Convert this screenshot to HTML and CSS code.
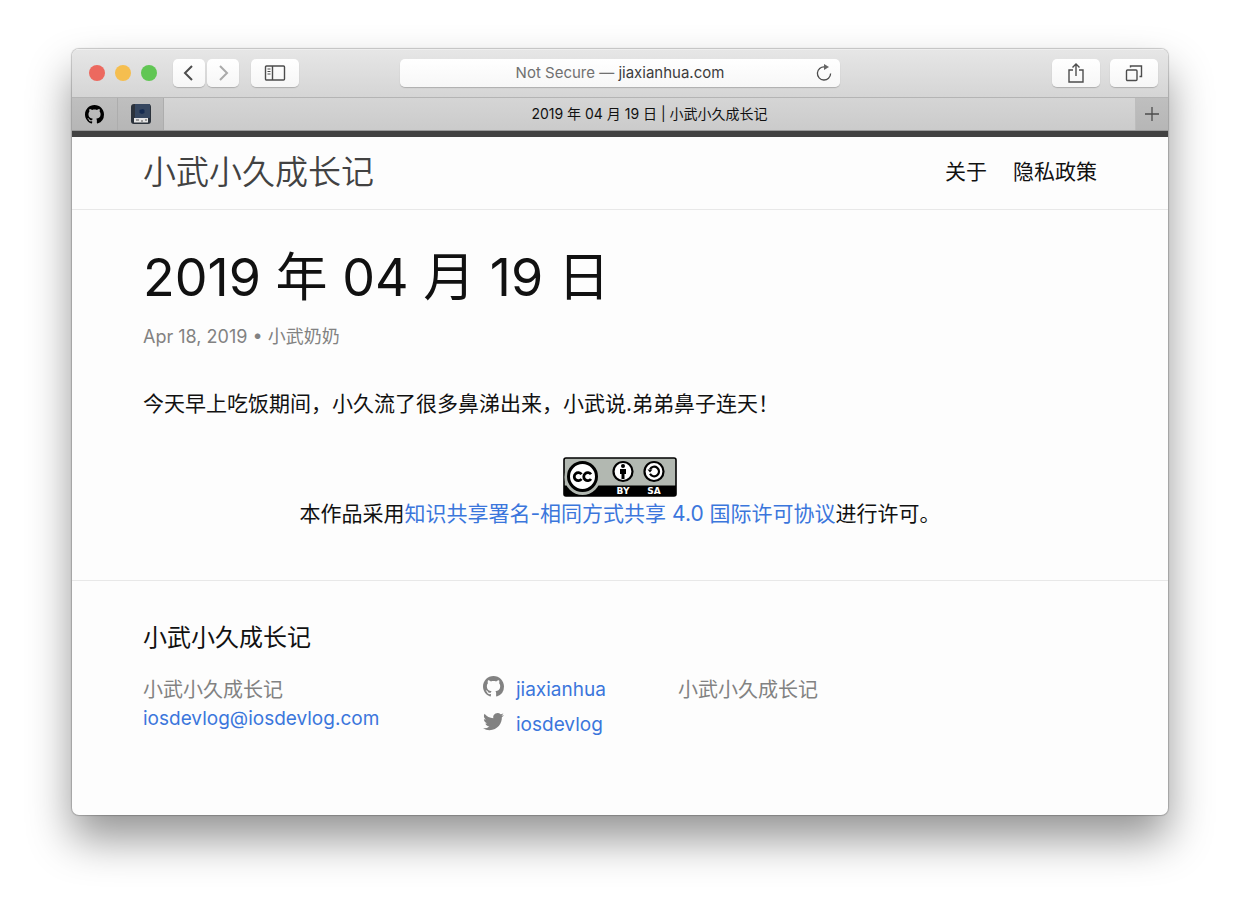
FILE: index.html
```html
<!DOCTYPE html>
<html lang="zh-CN">
<head>
<meta charset="utf-8">
<meta name="viewport" content="width=device-width, initial-scale=1">
<title>2019 年 04 月 19 日 | 小武小久成长记</title>
<link rel="stylesheet" href="styles.css">
</head>
<body>
<svg class="sprite" aria-hidden="true">
  <symbol id="github" viewBox="0 0 16 16"><path d="M8 0C3.58 0 0 3.58 0 8c0 3.54 2.29 6.53 5.47 7.59.4.07.55-.17.55-.38 0-.19-.01-.82-.01-1.49-2.01.37-2.53-.49-2.69-.94-.09-.23-.48-.94-.82-1.13-.28-.15-.68-.52-.01-.53.63-.01 1.08.58 1.23.82.72 1.21 1.87.87 2.33.66.07-.52.28-.87.51-1.07-1.78-.2-3.64-.89-3.64-3.95 0-.87.31-1.59.82-2.15-.08-.2-.36-1.02.08-2.12 0 0 .67-.21 2.2.82.64-.18 1.32-.27 2-.27s1.36.09 2 .27c1.53-1.04 2.2-.82 2.2-.82.44 1.1.16 1.92.08 2.12.51.56.82 1.27.82 2.15 0 3.07-1.87 3.75-3.65 3.95.29.25.54.73.54 1.48 0 1.07-.01 1.93-.01 2.2 0 .21.15.46.55.38A8.01 8.01 0 0 0 16 8c0-4.42-3.58-8-8-8z"/></symbol>
</svg>
<div class="window">
  <div class="toolbar">
    <div class="tools tools-left">
      <div class="lights">
        <button class="light light-close" aria-label="Close"></button>
        <button class="light light-min" aria-label="Minimize"></button>
        <button class="light light-zoom" aria-label="Zoom"></button>
      </div>
      <div class="history">
        <button class="tool tool-narrow" aria-label="Back"><svg width="20" height="20" viewBox="0 0 20 20"><path d="M13 3 6 10l7 7" stroke-width="2"/></svg></button>
        <button class="tool tool-narrow tool-off" aria-label="Forward"><svg width="20" height="20" viewBox="0 0 20 20"><path d="m7 3 7 7-7 7" stroke-width="2"/></svg></button>
      </div>
      <button class="tool" aria-label="Sidebar"><svg width="22" height="18" viewBox="0 0 22 18"><rect x="1.5" y="2" width="19" height="14" rx="1" stroke-width="1.4"/><path d="M8.5 2v14" stroke-width="1.4"/><path d="M3.5 5h3M3.5 7.5h3M3.5 10h3" stroke-width="1"/></svg></button>
    </div>
    <button class="address">
      <span class="address-text">Not Secure — <span class="domain">jiaxianhua.com</span></span>
      <svg class="reload" width="18" height="18" viewBox="0 0 18 18"><path d="M9.500 2.800A6.600 6.600 0 1 0 15.600 9.500" stroke-width="1.300"/><path class="solid" d="M9 0v6l5-3z"/></svg>
    </button>
    <div class="tools tools-right">
      <button class="tool" aria-label="Share"><svg width="18" height="22" viewBox="0 0 18 22"><path d="M6 8H2v12h14V8h-4M9 14V2M5.500 5.500 9 2l3.500 3.500" stroke-width="1.400"/></svg></button>
      <button class="tool" aria-label="Show all tabs"><svg width="18" height="18" viewBox="0 0 18 18"><rect x="1.500" y="6" width="10.500" height="10.500" rx="1" stroke-width="1.400"/><path d="M5.500 3.500V2h11v10.500H14.500" stroke-width="1.400"/></svg></button>
    </div>
  </div>
  <div class="tabs">
    <button class="pin" aria-label="GitHub"><svg width="19" height="19"><use href="#github"/></svg></button>
    <button class="pin" aria-label="Book"><svg width="20" height="20" viewBox="0 0 20 20"><rect width="20" height="20" rx="3" fill="#2b323b"/><path d="M4 0h15v14H4z" fill="#35465f"/><path d="M10 5.500 12 5l1.500 1v3L11 10 8.500 9V6z" fill="#142a50"/><path d="M3 14h14v4.500H3z" fill="#e4e4e4"/><path d="M5 16h3m2 1h2m2-1h2" stroke="#555" stroke-width="1.200"/></svg></button>
    <button class="tab">2019 年 04 月 19 日 | 小武小久成长记</button>
    <button class="new-tab" aria-label="New tab"><svg width="16" height="16" viewBox="0 0 16 16"><path d="M8 1v14M1 8h14" stroke-width="1.300"/></svg></button>
  </div>
  <div class="page">
    <header class="site-header">
      <a class="site-title" href="#">小武小久成长记</a>
      <nav class="site-nav"><a href="#">关于</a><a href="#">隐私政策</a></nav>
    </header>
    <main class="post">
      <h1>2019 年 04 月 19 日</h1>
      <p class="meta">Apr 18, 2019 • 小武奶奶</p>
      <p class="entry">今天早上吃饭期间，小久流了很多鼻涕出来，小武说.弟弟鼻子连天！</p>
      <div class="license">
        <a href="#" class="badge" aria-label="知识共享许可协议">
          <svg width="114" height="40" viewBox="0 0 114 40">
            <rect x="1" y="1" width="112" height="38" rx="2" fill="#b2b8b1" stroke="#000" stroke-width="1.600"/>
            <path d="M1 28.500h112V39H1z"/>
            <circle cx="19.500" cy="20" r="18" fill="#b2b8b1"/>
            <circle cx="19.500" cy="19.500" r="14" fill="#fff" stroke="#000" stroke-width="3"/>
            <path d="M18.500 17.300a4 4 0 1 0 0 4.700M28 17.300a4 4 0 1 0 0 4.700" fill="none" stroke="#000" stroke-width="2.800"/>
            <circle cx="60" cy="14.500" r="9.500" fill="#fff" stroke="#000" stroke-width="2.200"/>
            <circle cx="60" cy="9" r="2"/><path d="M57 12h6v5h-1.500v5h-3v-5H57z"/>
            <circle cx="91" cy="14.500" r="9.500" fill="#fff" stroke="#000" stroke-width="2.200"/>
            <path d="M87 12.200a4.800 4.800 0 1 1 0 4.600" fill="none" stroke="#000" stroke-width="2.200"/>
            <path d="M84.500 12.500h5L87 15.500z"/>
            <text class="badge-text" x="60" y="37">BY</text><text class="badge-text" x="91" y="37">SA</text>
          </svg>
        </a>
        <p>本作品采用<a href="#">知识共享署名-相同方式共享 4.0 国际许可协议</a>进行许可。</p>
      </div>
    </main>
    <footer class="site-footer">
      <h2>小武小久成长记</h2>
      <div class="columns">
        <div class="contact"><p>小武小久成长记</p><a href="#">iosdevlog@iosdevlog.com</a></div>
        <ul class="social">
          <li><a href="#"><svg width="21" height="21"><use href="#github"/></svg>jiaxianhua</a></li>
          <li><a href="#"><svg width="21" height="21" viewBox="0 0 16 16"><path d="M15.969 3.058c-.586.26-1.217.436-1.878.515.675-.405 1.194-1.045 1.438-1.809-.632.375-1.332.647-2.076.793A3.270 3.270 0 0 0 7.880 5.538C5.163 5.402 2.753 4.100 1.140 2.122c-.879 1.516-.454 3.407 1.010 4.365-.537-.017-1.042-.164-1.480-.409-.036 1.582 1.100 3.022 2.625 3.342-.472.128-.968.147-1.477.056.416 1.299 1.624 2.245 3.055 2.271A6.578 6.578 0 0 1 .018 13.103a9.257 9.257 0 0 0 5.018 1.471c6.078 0 9.512-5.133 9.334-9.737a6.700 6.700 0 0 0 1.599-1.779z"/></svg>iosdevlog</a></li>
        </ul>
        <p>小武小久成长记</p>
      </div>
    </footer>
  </div>
</div>
</body>
</html>
```
FILE: styles.css
```css
* { box-sizing: border-box; }

body {
  margin: 0;
  padding: 49px 72px 95px;
  background: #fff;
  color: #111;
  font: 21px/32px Inter, "Noto Sans CJK SC", sans-serif;
  overflow-x: hidden;
}

h1, h2, p, ul { margin: 0; padding: 0; font-weight: 400; }
a { color: #3b76dc; text-decoration: none; }
button { margin: 0; padding: 0; border: 0; background: none; font: inherit; color: inherit; }
svg { display: block; }
.sprite { display: none; }

.window {
  display: flex;
  flex-direction: column;
  min-height: calc(100vh - 144px);
  border-radius: 7px;
  overflow: hidden;
  background: #fdfdfd;
  box-shadow: 0 0 1px 1px rgba(0, 0, 0, .2), 0 24px 44px rgba(0, 0, 0, .42);
}

/* Browser toolbar */
.toolbar {
  display: flex;
  align-items: center;
  gap: 16px;
  height: 48px;
  padding: 0 10px 1px;
  background: linear-gradient(#e6e6e6, #d5d5d5);
  border-top: 1px solid #efefef;
}
.tools { display: flex; flex: 1; align-items: center; }
.tools-left { gap: 12px; }
.tools-right { justify-content: flex-end; gap: 10px; }
.lights { display: flex; gap: 10px; margin: 0 4px 0 7px; }
.light { width: 16px; height: 16px; border-radius: 50%; }
.light-close { background: #ec695f; }
.light-min { background: #f5be4f; }
.light-zoom { background: #61c654; }
.history { display: flex; gap: 2px; }
.tool {
  display: flex;
  align-items: center;
  justify-content: center;
  width: 48px;
  height: 28px;
  border-radius: 5px;
  background: linear-gradient(#fff, #f6f6f6);
  box-shadow: 0 1px 1px rgba(0, 0, 0, .2);
}
.tool-narrow { width: 32px; }
.tool svg, .reload, .new-tab svg { fill: none; stroke: #4c4c4c; }
.tool-off svg { stroke: #aaa; }
.address {
  display: flex;
  flex: 0 1 440px;
  align-items: center;
  height: 28px;
  padding-right: 7px;
  border-radius: 5px;
  background: linear-gradient(#fff, #f7f7f7);
  box-shadow: 0 1px 1px rgba(0, 0, 0, .2);
  color: #707070;
  font-size: 15px;
}
.address-text { flex: 1; padding-left: 25px; }
.domain { color: #3c3c3c; }
.reload .solid { fill: #666; stroke: none; }

/* Tab strip */
.tabs {
  display: flex;
  height: 34px;
  border-top: 1px solid #b4b4b4;
  border-bottom: 1px solid #999;
  background: linear-gradient(#d5d5d5, #cbcbcb);
}
.pin, .new-tab {
  display: flex;
  align-items: center;
  justify-content: center;
  width: 46px;
  background: linear-gradient(#bfbfbf, #b6b6b6);
  border-right: 1px solid #adadad;
}
.tab { flex: 1; font-size: 14px; }
.new-tab { width: 33px; border-right: 0; border-left: 1px solid #bdbdbd; }

/* Blog */
.page { display: flex; flex: 1; flex-direction: column; border-top: 6px solid #424242; }
.site-header {
  display: flex;
  align-items: center;
  justify-content: space-between;
  min-height: 73px;
  padding: 0 71px 2px;
  border-bottom: 1px solid #e8e8e8;
}
.site-title { color: #424242; font-size: 33px; font-weight: 350; }
.site-nav { display: flex; gap: 26px; }
.site-nav a { color: #111; }

.post { padding: 40px 71px 50px; }
.post h1 { font-size: 52px; line-height: 56px; }
.meta { margin-top: 17px; color: #828282; font-size: 18px; line-height: 28px; }
.entry { margin-top: 37px; }
.license { margin-top: 37px; text-align: center; }
.badge { display: flex; justify-content: center; }
.badge + p { margin-top: 1px; }
.badge-text { fill: #fff; font: 700 9px "DejaVu Sans", sans-serif; text-anchor: middle; }

.site-footer {
  flex: 1;
  padding: 41px 71px;
  border-top: 1px solid #e8e8e8;
  color: #828282;
  font-size: 20px;
  line-height: 28px;
}
.site-footer h2 { color: #111; font-size: 24px; line-height: 32px; }
.columns { display: grid; grid-template-columns: 340fr 195fr 419fr; margin-top: 22px; }
.columns a { font-size: 19px; }
.social { display: flex; flex-direction: column; gap: 7px; list-style: none; }
.social a { display: flex; gap: 12px; }
.social svg { fill: #828282; }
```
